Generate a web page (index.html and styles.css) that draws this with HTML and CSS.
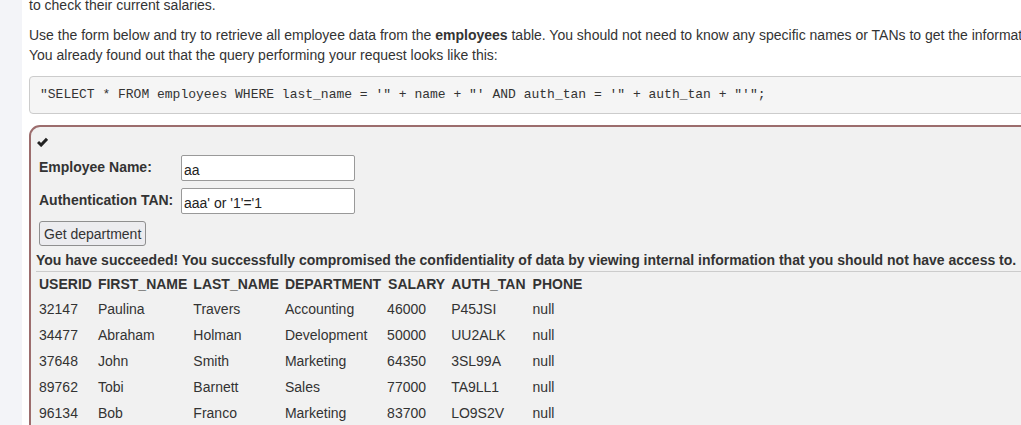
FILE: index.html
```html
<!DOCTYPE html>
<html>
<head>
<meta charset="utf-8">
<link rel="stylesheet" href="styles.css">
</head>
<body>
<div class="page">
  <div class="sidebar"></div>
  <div class="main">
    <p class="para">to check their current salaries.</p>
    <p class="para">Use the form below and try to retrieve all employee data from the <b>employees</b> table. You should not need to know any specific names or TANs to get the information you need.<br>You already found out that the query performing your request looks like this:</p>
    <pre class="code">"SELECT * FROM employees WHERE last_name = '" + name + "' AND auth_tan = '" + auth_tan + "'";</pre>
    <div class="feedback">
      <div class="check"><svg width="11" height="10" viewBox="0 0 11 10"><path d="M1 5 L4.1 8 L10 1.8" fill="none" stroke="#222" stroke-width="3" stroke-linejoin="miter" stroke-linecap="butt"/></svg></div>
      <div class="form">
        <label class="lbl">Employee Name:</label>
        <input class="field" type="text" value="aa">
        <label class="lbl">Authentication TAN:</label>
        <input class="field" type="text" value="aaa' or '1'='1">
        <button class="btn">Get department</button>
      </div>
      <div class="success">You have succeeded! You successfully compromised the confidentiality of data by viewing internal information that you should not have access to.</div>
      <div class="rule"></div>
      <table class="emp">
        <tr><th>USERID</th><th>FIRST_NAME</th><th>LAST_NAME</th><th>DEPARTMENT</th><th class="wide">SALARY</th><th class="wide2">AUTH_TAN</th><th>PHONE</th></tr>
        <tr><td>32147</td><td>Paulina</td><td>Travers</td><td>Accounting</td><td>46000</td><td>P45JSI</td><td>null</td></tr>
        <tr><td>34477</td><td>Abraham</td><td>Holman</td><td>Development</td><td>50000</td><td>UU2ALK</td><td>null</td></tr>
        <tr><td>37648</td><td>John</td><td>Smith</td><td>Marketing</td><td>64350</td><td>3SL99A</td><td>null</td></tr>
        <tr><td>89762</td><td>Tobi</td><td>Barnett</td><td>Sales</td><td>77000</td><td>TA9LL1</td><td>null</td></tr>
        <tr><td>96134</td><td>Bob</td><td>Franco</td><td>Marketing</td><td>83700</td><td>LO9S2V</td><td>null</td></tr>
      </table>
    </div>
  </div>
</div>
</body>
</html>
```
FILE: styles.css
```css
html, body {
  margin: 0;
  padding: 0;
  overflow: hidden;
  background: #ffffff;
}
body {
  font-family: "Liberation Sans", Arial, Helvetica, sans-serif;
  font-size: 14px;
  line-height: 20px;
  color: #333333;
}
.page {
  display: flex;
  width: 1200px;
  height: 425px;
  overflow: hidden;
}
.sidebar {
  width: 22px;
  flex: 0 0 22px;
  background: #f3f4f8;
}
.main {
  flex: 1;
  padding-left: 7px;
  margin-top: -5px;
}
.para {
  margin: 0 0 10px 0;
  white-space: nowrap;
}
.code {
  margin: 11px 0 10px 0;
  padding: 9px 10px 9px 10px;
  font-family: "Liberation Mono", "Courier New", monospace;
  font-size: 13px;
  line-height: 18px;
  color: #333333;
  background: #f5f5f5;
  border: 1px solid #cccccc;
  border-radius: 4px;
  white-space: pre;
}
.feedback {
  border: 2px solid #9c6d6d;
  border-radius: 11px;
  background: #f1f1f1;
  padding: 5px 5px 20px 5px;
  margin-top: 11px;
}
.check {
  height: 20px;
  display: flex;
  align-items: center;
  padding-left: 1px;
}
.check svg {
  display: block;
}
.form {
  display: grid;
  grid-template-columns: 142px 174px;
  row-gap: 7px;
  align-items: center;
  padding-left: 3px;
  margin-top: 3px;
}
.lbl {
  font-weight: bold;
  line-height: 20px;
  margin-top: -2px;
}
.field {
  box-sizing: border-box;
  width: 174px;
  height: 26px;
  margin: 0;
  padding: 3px 2px 0 2px;
  border: 1px solid #999999;
  border-radius: 2px;
  background: #ffffff;
  font-family: "Liberation Sans", Arial, sans-serif;
  font-size: 14px;
  color: #222222;
}
.btn {
  grid-column: 1 / 3;
  justify-self: start;
  box-sizing: border-box;
  height: 25px;
  margin: 0;
  padding: 0 4px;
  border: 1px solid #8f8f8f;
  border-radius: 3px;
  background: #ececef;
  font-family: "Liberation Sans", Arial, sans-serif;
  font-size: 14px;
  color: #333333;
}
.success {
  font-weight: bold;
  white-space: nowrap;
  margin-top: 4px;
}
.rule {
  height: 1px;
  background: #cccccc;
  margin-top: 1px;
}
.emp {
  border-collapse: collapse;
  border-spacing: 0;
}
.emp th, .emp td {
  text-align: left;
  padding: 3px 3px;
  line-height: 20px;
  white-space: nowrap;
}
.emp th {
  font-weight: bold;
  padding-top: 2px;
  padding-bottom: 2px;
}
.emp th.wide {
  padding-left: 4px;
}
.emp th.wide2 {
  padding-right: 4px;
}
.emp td {
  font-weight: normal;
}
```
